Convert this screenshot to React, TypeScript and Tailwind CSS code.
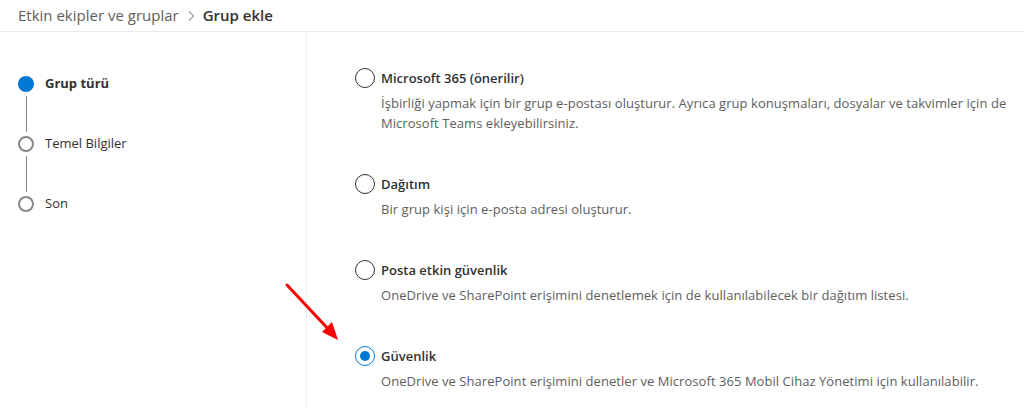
import { useState } from 'react'

type GroupType = {
  id: string
  title: string
  lines: string[]
}

const groupTypes: GroupType[] = [
  {
    id: 'm365',
    title: 'Microsoft 365 (önerilir)',
    lines: [
      'İşbirliği yapmak için bir grup e-postası oluşturur. Ayrıca grup konuşmaları, dosyalar ve takvimler için de',
      'Microsoft Teams ekleyebilirsiniz.',
    ],
  },
  {
    id: 'distribution',
    title: 'Dağıtım',
    lines: ['Bir grup kişi için e-posta adresi oluşturur.'],
  },
  {
    id: 'mailsecurity',
    title: 'Posta etkin güvenlik',
    lines: ['OneDrive ve SharePoint erişimini denetlemek için de kullanılabilecek bir dağıtım listesi.'],
  },
  {
    id: 'security',
    title: 'Güvenlik',
    lines: ['OneDrive ve SharePoint erişimini denetler ve Microsoft 365 Mobil Cihaz Yönetimi için kullanılabilir.'],
  },
]

const steps = [
  { label: 'Grup türü', active: true },
  { label: 'Temel Bilgiler', active: false },
  { label: 'Son', active: false },
]

function Radio({ checked }: { checked: boolean }) {
  return (
    <span
      className={
        checked
          ? 'flex h-5 w-5 shrink-0 items-center justify-center rounded-full border border-[#0078d4] bg-white'
          : 'flex h-5 w-5 shrink-0 items-center justify-center rounded-full border border-[#323130] bg-white'
      }
    >
      {checked && <span className="h-[10px] w-[10px] rounded-full bg-[#0078d4]" />}
    </span>
  )
}

export default function App() {
  const [selected, setSelected] = useState('security')

  return (
    <div
      className="relative h-[408px] w-[1024px] overflow-hidden bg-white text-[#323130]"
      style={{ fontFamily: '"Open Sans", "Noto Sans", sans-serif' }}
    >
      {/* Breadcrumb */}
      <div className="flex h-[32px] items-center border-b border-[#edebe9] pl-[18px] text-[15px]">
        <span className="text-[#605e5c]">Etkin ekipler ve gruplar</span>
        <svg className="mx-[8px]" width="8" height="12" viewBox="0 0 8 12" fill="none">
          <path d="M2 1.5 6.5 6 2 10.5" stroke="#a19f9d" strokeWidth="1.2" />
        </svg>
        <span className="font-semibold text-[#323130]">Grup ekle</span>
      </div>

      <div className="flex h-[376px]">
        {/* Steps */}
        <aside className="w-[307px] shrink-0 border-r border-[#edebe9] pl-[18px] pt-[44px]">
          {steps.map((s, i) => (
            <div key={s.label}>
              <div className="flex h-4 items-center gap-[11px]">
                {s.active ? (
                  <span className="h-4 w-4 rounded-full bg-[#0078d4]" />
                ) : (
                  <span className="h-4 w-4 rounded-full border-2 border-[#8a8886] bg-white" />
                )}
                <span className={s.active ? 'text-[13px] font-bold' : 'text-[13px]'}>{s.label}</span>
              </div>
              {i < steps.length - 1 && <div className="my-1 ml-[7.5px] h-[36px] w-px bg-[#8a8886]" />}
            </div>
          ))}
        </aside>

        {/* Group types */}
        <main className="flex flex-1 flex-col gap-[41px] pl-[48px] pt-[36px]">
          {groupTypes.map((g) => (
            <div key={g.id} className="cursor-pointer" onClick={() => setSelected(g.id)}>
              <div className="flex h-5 items-center gap-[6px]">
                <Radio checked={selected === g.id} />
                <span className="text-[13px] font-semibold leading-5">{g.title}</span>
              </div>
              <div className="mt-[5px] pl-[26px] text-[13px] leading-5 tracking-[0.05px] text-[#605e5c]">
                {g.lines.map((l) => (
                  <div key={l} className="whitespace-nowrap">
                    {l}
                  </div>
                ))}
              </div>
            </div>
          ))}
        </main>
      </div>

      {/* annotation arrow */}
      <svg className="absolute left-[282px] top-[280px]" width="62" height="66" viewBox="0 0 62 66">
        <line x1="5" y1="5" x2="49" y2="52" stroke="#ff0000" strokeWidth="3" strokeLinecap="round" />
        <path d="M56 60 L40 52 L50 42 Z" fill="#ff0000" />
      </svg>
    </div>
  )
}
